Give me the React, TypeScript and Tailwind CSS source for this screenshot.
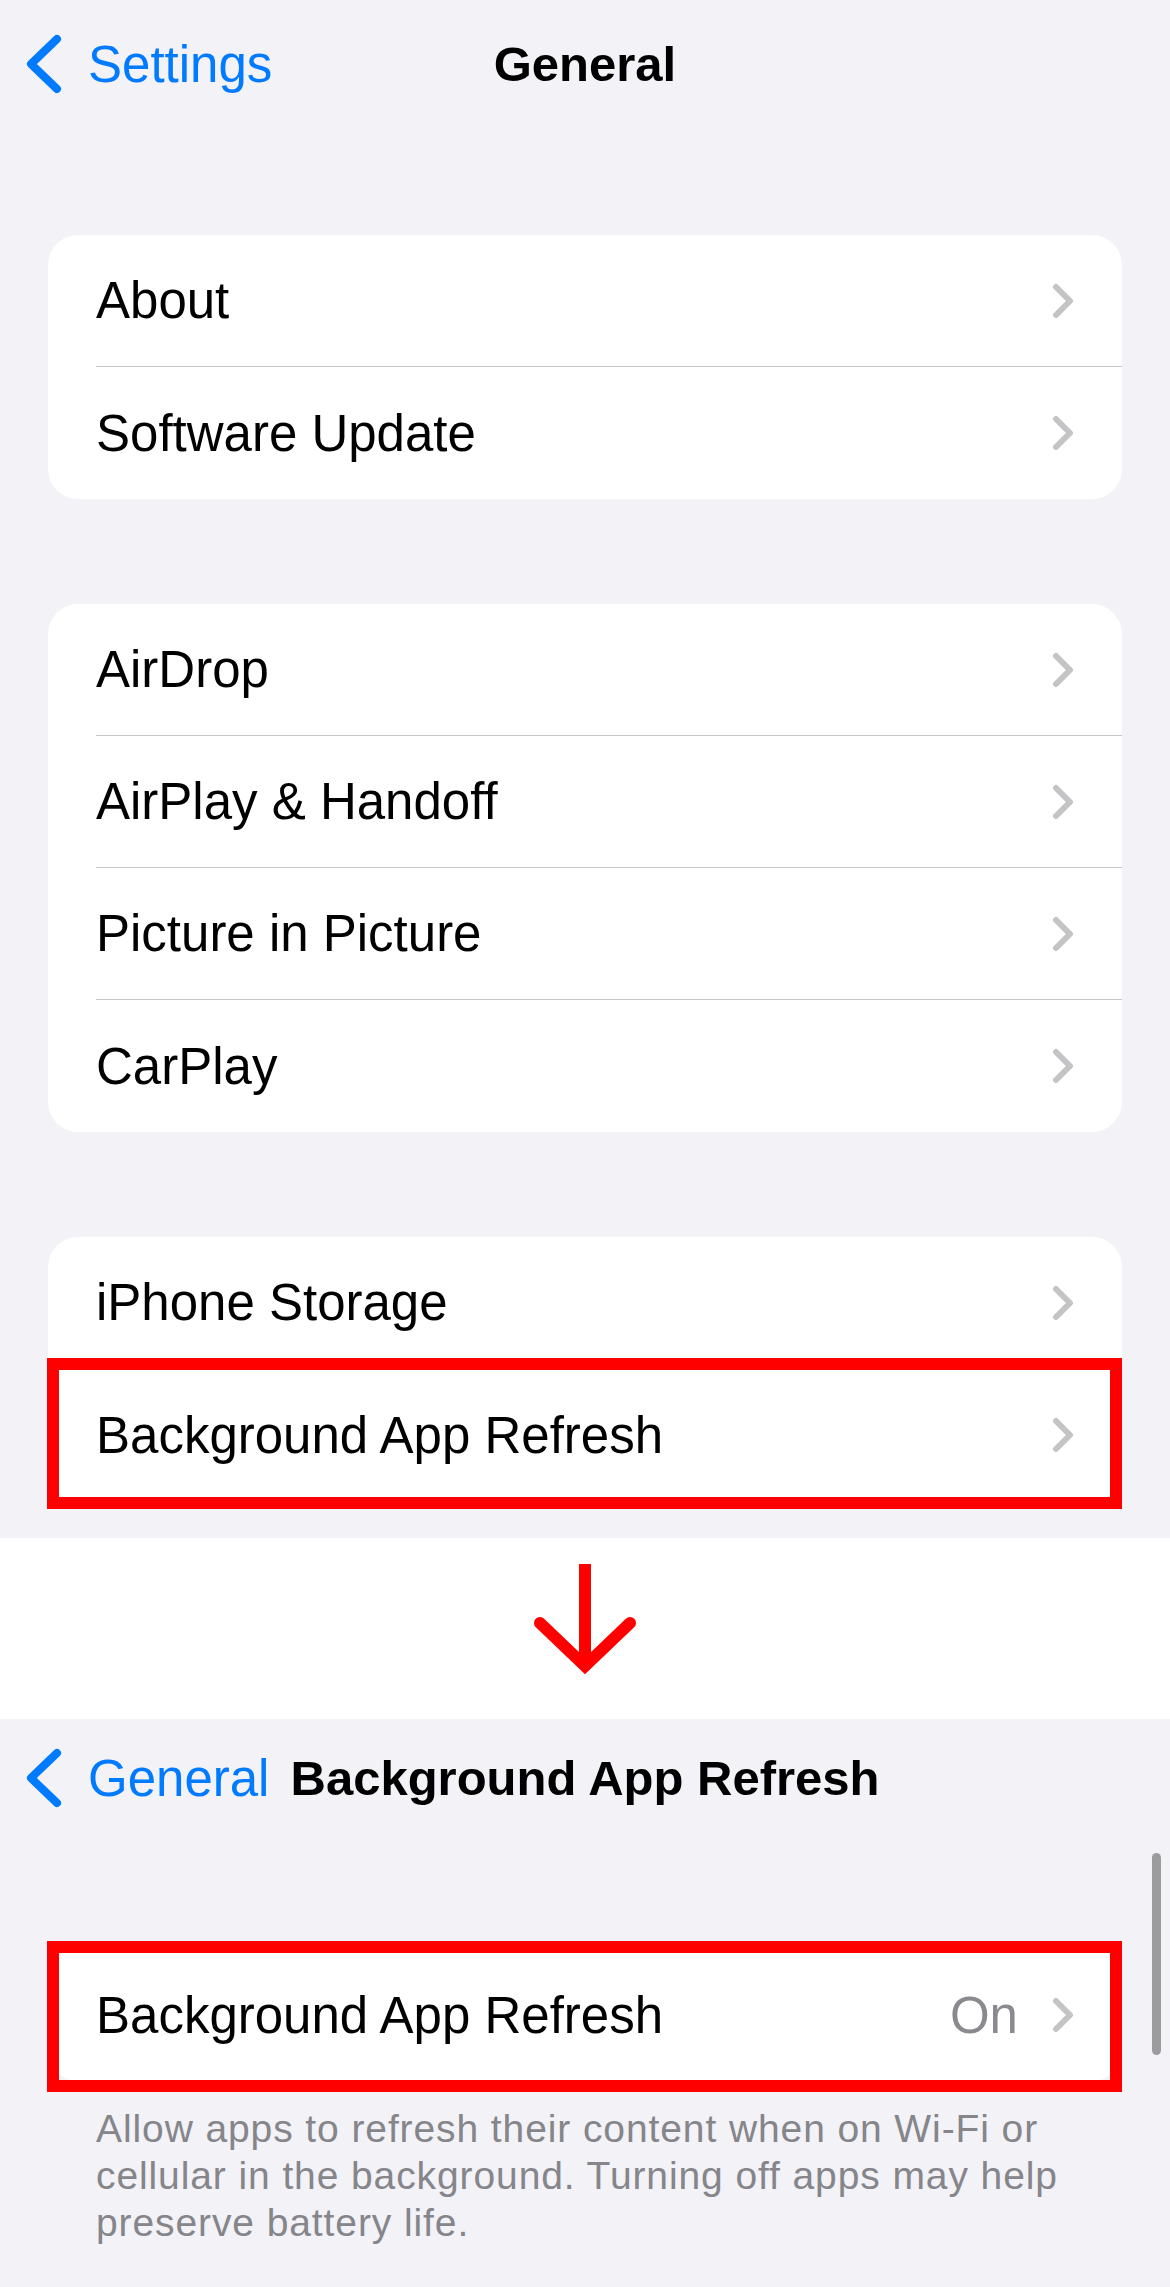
import React from 'react';

// Réglages iOS : "General" puis "Background App Refresh", avec annotations rouges.

type Item = { label: string; value?: string; mark?: 'top' | 'bottom' };

const sans = "font-['Liberation_Sans','Helvetica','Arial',sans-serif]";

function BackChevron() {
  return (
    <svg width="40" height="66" viewBox="0 0 40 66" className="shrink-0">
      <polyline
        points="33,8 7,33 33,58"
        fill="none"
        stroke="#007aff"
        strokeWidth="8"
        strokeLinecap="round"
        strokeLinejoin="round"
      />
    </svg>
  );
}

function Chevron() {
  return (
    <svg width="22" height="36" viewBox="0 0 22 36" className="shrink-0">
      <polyline
        points="4,4 18,18 4,32"
        fill="none"
        stroke="#c4c4c7"
        strokeWidth="6"
        strokeLinecap="round"
        strokeLinejoin="round"
      />
    </svg>
  );
}

function NavBar({ back, title, className }: { back: string; title: string; className: string }) {
  return (
    <div className={`grid grid-cols-[1fr_auto_1fr] items-center ${className}`}>
      <div className="flex items-center gap-[24px] pl-[24px] text-[51px] leading-none text-[#007aff]">
        <BackChevron />
        <span>{back}</span>
      </div>
      <div className="text-[49px] leading-none font-bold text-black">{title}</div>
      <div />
    </div>
  );
}

function Row({ item, last }: { item: Item; last: boolean }) {
  return (
    <div className="relative h-[132px] flex pl-[48px]">
      <div
        className={[
          'flex-1 flex items-center justify-between pr-[48px]',
          last ? '' : 'border-b border-[#c6c6c8]',
        ].join(' ')}
      >
        <span className="text-[51px] leading-none text-black">{item.label}</span>
        <div className="flex items-center gap-[34px]">
          {item.value && <span className="text-[51px] leading-none text-[#8a8a8e]">{item.value}</span>}
          <Chevron />
        </div>
      </div>
      {item.mark === 'top' && (
        <div className="absolute left-[-1px] right-0 top-[-11px] bottom-[-8px] border-[12px] border-[#ff0000]" />
      )}
      {item.mark === 'bottom' && (
        <div className="absolute left-[-1px] right-0 top-[-8px] bottom-[-11px] border-[12px] border-[#ff0000]" />
      )}
    </div>
  );
}

function Card({ items }: { items: Item[] }) {
  return (
    <div className="bg-white rounded-[30px] mx-[48px]">
      {items.map((it, i) => (
        <Row key={it.label} item={it} last={i === items.length - 1} />
      ))}
    </div>
  );
}

export default function App() {
  const groups: Item[][] = [
    [{ label: 'About' }, { label: 'Software Update' }],
    [{ label: 'AirDrop' }, { label: 'AirPlay & Handoff' }, { label: 'Picture in Picture' }, { label: 'CarPlay' }],
    [{ label: 'iPhone Storage' }, { label: 'Background App Refresh', mark: 'top' }],
  ];

  return (
    <div className={`${sans} w-[1170px] min-h-[2287px] flex flex-col bg-[#f2f2f7]`}>
      {/* Écran 1 : General */}
      <div className="h-[1538px] flex flex-col">
        <NavBar back="Settings" title="General" className="h-[128px]" />
        <div className="flex flex-col gap-[105px] pt-[107px]">
          {groups.map((g, i) => (
            <Card key={i} items={g} />
          ))}
        </div>
      </div>

      {/* Flèche */}
      <div className="h-[181px] bg-white flex justify-center pt-[17px]">
        <svg width="120" height="130" viewBox="0 0 120 130">
          <line x1="60" y1="9" x2="60" y2="112" stroke="#ff0000" strokeWidth="12" />
          <polyline
            points="15,68 60,111 105,68"
            fill="none"
            stroke="#ff0000"
            strokeWidth="12"
            strokeLinecap="round"
            strokeLinejoin="miter"
          />
        </svg>
      </div>

      {/* Écran 2 : Background App Refresh */}
      <div className="relative flex-1 flex flex-col">
        <NavBar back="General" title="Background App Refresh" className="h-[118px]" />
        <div className="mt-[112px]">
          <Card items={[{ label: 'Background App Refresh', value: 'On', mark: 'bottom' }]} />
        </div>
        <div className="mt-[24px] px-[96px] text-[39px] leading-[47px] tracking-[0.9px] text-[#85858a]">
          <div className="whitespace-nowrap">Allow apps to refresh their content when on Wi-Fi or</div>
          <div className="whitespace-nowrap">cellular in the background. Turning off apps may help</div>
          <div className="whitespace-nowrap">preserve battery life.</div>
        </div>
        <div className="absolute right-[9px] top-[134px] w-[9px] h-[202px] rounded-full bg-[#9c9c9f]" />
      </div>
    </div>
  );
}
